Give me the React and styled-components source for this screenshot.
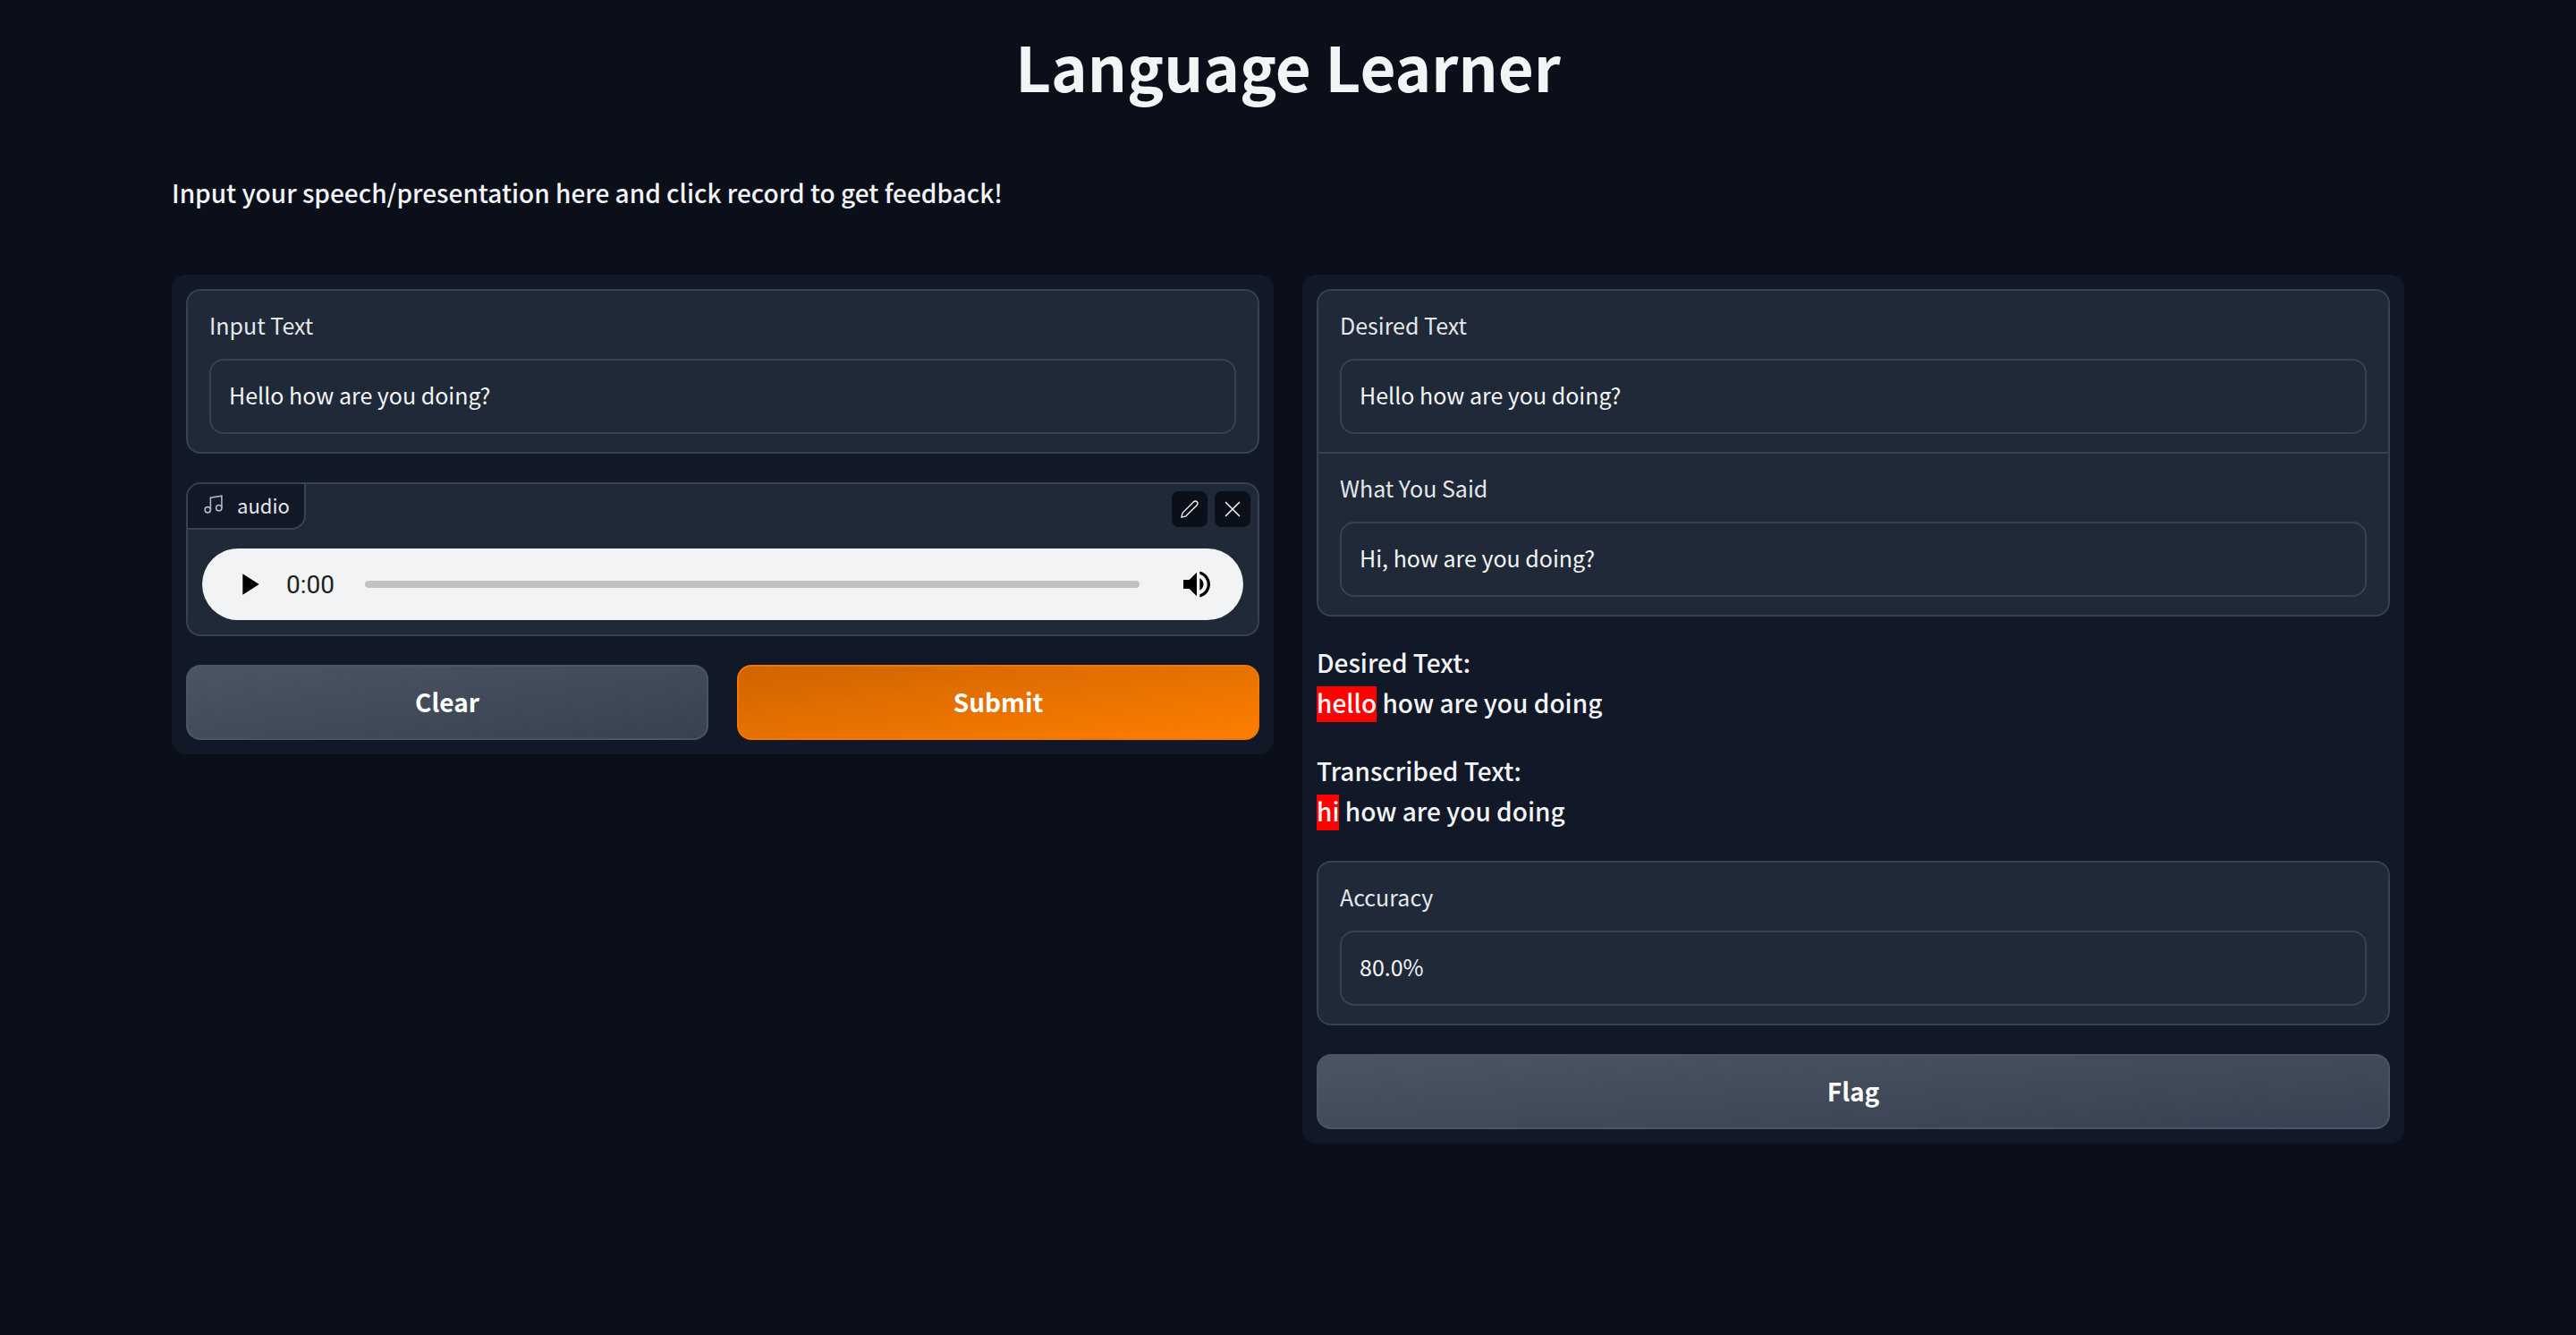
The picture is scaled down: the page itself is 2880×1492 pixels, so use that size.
import React, { useState } from 'react';
import styled, { createGlobalStyle } from 'styled-components';

const sans = '"Source Sans Pro", "Noto Sans CJK SC", "Noto Sans", sans-serif';

const GlobalStyle = createGlobalStyle`
  *, *::before, *::after { box-sizing: border-box; }
  body {
    margin: 0;
    min-height: 100vh;
    background: #0b0f19;
    color: #f3f4f6;
    font-family: ${sans};
    font-size: 28px;
    font-weight: 500;
    line-height: 45px;
  }
  h1, p { margin: 0; }
`;

const Page = styled.main`
  display: flex;
  flex-direction: column;
  padding: 32px 192px;
`;

const Title = styled.h1`
  font-size: 69px;
  line-height: 82px;
  font-weight: 700;
  text-align: center;
`;

const Description = styled.p`
  margin: 79px 0 69px;
`;

const Columns = styled.div`
  display: grid;
  grid-template-columns: 1fr 1fr;
  align-items: start;
  gap: 32px;
`;

const Panel = styled.section`
  display: flex;
  flex-direction: column;
  gap: 32px;
  padding: 16px;
  border-radius: 16px;
  background: #111827;
`;

const Block = styled.div`
  overflow: hidden;
  border: 2px solid #374151;
  border-radius: 16px;
  background: #1f2937;
`;

const FieldRow = styled.div`
  display: flex;
  flex-direction: column;
  gap: 20px;
  padding: 20px 24px;

  & + & { border-top: 2px solid #374151; }
`;

const Label = styled.label`
  font-size: 25px;
  font-weight: 400;
  line-height: 36px;
  color: #e5e7eb;
`;

const TextBox = styled.input`
  width: 100%;
  height: 84px;
  padding: 0 20px 4px;
  border: 2px solid #374151;
  border-radius: 16px;
  outline: none;
  background: #1f2937;
  color: #f3f4f6;
  font-family: inherit;
  font-size: 25px;
  font-weight: 400;
  line-height: 40px;
`;

const AudioHeader = styled.div`
  display: flex;
  justify-content: space-between;
  align-items: flex-start;
  height: 52px;
`;

const AudioTag = styled.div`
  display: flex;
  align-items: center;
  gap: 14px;
  height: 51px;
  padding: 0 16px 4px;
  border: solid #374151;
  border-width: 0 2px 2px 0;
  border-bottom-right-radius: 16px;
  background: #111827;
  color: #e5e7eb;
  font-size: 22px;
  font-weight: 400;
  line-height: 36px;

  svg { color: #b4b9c1; }
`;

const AudioActions = styled.div`
  display: flex;
  gap: 8px;
  padding: 8px 8px 0;
`;

const IconButton = styled.button`
  display: grid;
  place-items: center;
  width: 40px;
  height: 40px;
  padding: 0;
  border: 0;
  border-radius: 8px;
  background: #0b0f19;
  color: #f3f4f6;
  cursor: pointer;
`;

const Player = styled.div`
  display: flex;
  align-items: center;
  height: 80px;
  margin: 20px 16px 16px;
  padding: 0 32px;
  border-radius: 40px;
  background: #f1f3f4;
  color: #000;
`;

const PlayerButton = styled.button`
  display: grid;
  place-items: center;
  padding: 0;
  border: 0;
  background: none;
  color: inherit;
  cursor: pointer;
`;

const Time = styled.span`
  margin: 0 34px 0 22px;
  color: #202124;
  font-family: Roboto, sans-serif;
  font-size: 28px;
  font-weight: 400;
`;

const Seek = styled.input`
  flex: 1;
  min-width: 0;
  height: 8px;
  margin: 0 44px 0 0;
  appearance: none;
  border-radius: 4px;
  background: #c1c2c3;

  &::-webkit-slider-thumb { appearance: none; width: 0; height: 0; }
`;

const ButtonRow = styled.div`
  display: flex;
  gap: 32px;
`;

const Button = styled.button`
  flex: 1;
  height: 84px;
  padding: 0 24px 2px;
  border: 2px solid ${(p) => (p.$primary ? '#f47700' : '#4b5563')};
  border-radius: 16px;
  background: ${(p) =>
    p.$primary
      ? 'linear-gradient(to bottom right, #ce6400, #ff7e00)'
      : 'linear-gradient(to bottom right, #4b5563, #374151)'};
  background-origin: border-box;
  color: #fff;
  font-family: inherit;
  font-size: 28px;
  font-weight: 700;
  line-height: 40px;
  cursor: pointer;
`;

const Comparison = styled.div`
  display: flex;
  flex-direction: column;
  gap: 31px;
  margin: -3px 0 1px;
`;

const Miss = styled.mark`
  display: inline-block;
  padding-bottom: 4px;
  line-height: 36px;
  background: #f00;
  color: inherit;
`;

function Field({ id, label, value, readOnly }) {
  const [text, setText] = useState(value);
  return (
    <FieldRow>
      <Label htmlFor={id}>{label}</Label>
      <TextBox
        id={id}
        type="text"
        value={text}
        readOnly={readOnly}
        onChange={(e) => setText(e.target.value)}
      />
    </FieldRow>
  );
}

const MusicIcon = () => (
  <svg width="25" height="25" viewBox="0 0 24 24" fill="none" stroke="currentColor" strokeWidth="1.5" aria-hidden="true">
    <path d="M9 18V5l12-2v13" />
    <circle cx="6" cy="18" r="3" />
    <circle cx="18" cy="16" r="3" />
  </svg>
);

const PencilIcon = () => (
  <svg width="22" height="22" viewBox="0 0 24 24" fill="none" stroke="currentColor" strokeWidth="1.5" strokeLinecap="round" strokeLinejoin="round" aria-hidden="true">
    <path d="M17 3a2.828 2.828 0 1 1 4 4L7.500 20.500 2 22l1.500-5.500L17 3z" />
  </svg>
);

const CloseIcon = () => (
  <svg width="18" height="18" viewBox="0 0 18 18" fill="none" stroke="currentColor" strokeWidth="1.600" strokeLinecap="round" aria-hidden="true">
    <path d="M1.500 1.500l15 15M16.500 1.500l-15 15" />
  </svg>
);

const PlayIcon = () => (
  <svg width="40" height="40" viewBox="0 0 24 24" fill="currentColor" aria-hidden="true">
    <path d="M8 5v14l11-7z" />
  </svg>
);

const VolumeIcon = () => (
  <svg width="40" height="40" viewBox="0 0 24 24" fill="currentColor" aria-hidden="true">
    <path d="M3 9v6h4l5 5V4L7 9H3zm13.500 3c0-1.770-1.020-3.290-2.500-4.030v8.050c1.480-.73 2.500-2.250 2.500-4.020zM14 3.230v2.060c2.890.86 5 3.540 5 6.710s-2.110 5.850-5 6.710v2.060c4.010-.91 7-4.490 7-8.770s-2.990-7.860-7-8.770z" />
  </svg>
);

export default function App() {
  return (
    <>
      <GlobalStyle />
      <Page>
        <Title>Language Learner</Title>
        <Description>Input your speech/presentation here and click record to get feedback!</Description>
        <Columns>
          <Panel>
            <Block>
              <Field id="input-text" label="Input Text" value="Hello how are you doing?" />
            </Block>
            <Block>
              <AudioHeader>
                <AudioTag>
                  <MusicIcon />
                  audio
                </AudioTag>
                <AudioActions>
                  <IconButton type="button" aria-label="Edit"><PencilIcon /></IconButton>
                  <IconButton type="button" aria-label="Clear recording"><CloseIcon /></IconButton>
                </AudioActions>
              </AudioHeader>
              <Player>
                <PlayerButton type="button" aria-label="Play"><PlayIcon /></PlayerButton>
                <Time>0:00</Time>
                <Seek type="range" min="0" max="100" defaultValue="0" aria-label="Seek" />
                <PlayerButton type="button" aria-label="Mute"><VolumeIcon /></PlayerButton>
              </Player>
            </Block>
            <ButtonRow>
              <Button type="button">Clear</Button>
              <Button type="button" $primary>Submit</Button>
            </ButtonRow>
          </Panel>
          <Panel>
            <Block>
              <Field id="desired-text" label="Desired Text" value="Hello how are you doing?" readOnly />
              <Field id="said-text" label="What You Said" value="Hi, how are you doing?" readOnly />
            </Block>
            <Comparison>
              <p>Desired Text:<br /><Miss>hello</Miss> how are you doing</p>
              <p>Transcribed Text:<br /><Miss>hi</Miss> how are you doing</p>
            </Comparison>
            <Block>
              <Field id="accuracy" label="Accuracy" value="80.0%" readOnly />
            </Block>
            <ButtonRow>
              <Button type="button">Flag</Button>
            </ButtonRow>
          </Panel>
        </Columns>
      </Page>
    </>
  );
}
